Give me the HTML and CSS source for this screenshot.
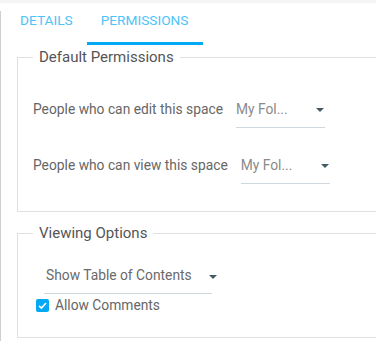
FILE: index.html
```html
<!DOCTYPE html>
<html>

<head>
  <title>Space Settings</title>
  <link rel="stylesheet" href="styles.css">
</head>

<body>
  <div class="band"></div>
  <div class="panel">
    <div class="tabs">
      <div class="tab">Details</div>
      <div class="tab active">Permissions</div>
    </div>

    <fieldset class="group">
      <legend>Default Permissions</legend>
      <div class="row first">
        <span class="label">People who can edit this space</span>
        <div class="select">
          <span class="value">My Fol...</span>
          <span class="caret"></span>
        </div>
      </div>
      <div class="row">
        <span class="label">People who can view this space</span>
        <div class="select">
          <span class="value">My Fol...</span>
          <span class="caret"></span>
        </div>
      </div>
    </fieldset>

    <fieldset class="group viewing">
      <legend>Viewing Options</legend>
      <div class="select wide">
        <span class="value">Show Table of Contents</span>
        <span class="caret"></span>
      </div>
      <label class="check">
        <span class="box">
          <svg width="11" height="11" viewBox="0 0 11 11">
            <path d="M2 5.8 L4.4 8 L9 3" fill="none" stroke="#fff" stroke-width="1.6" />
          </svg>
        </span>
        Allow Comments
      </label>
    </fieldset>
  </div>
</body>

</html>
```

FILE: styles.css
```css
html,
body {
  margin: 0;
  height: 341px;
  overflow: hidden;
  background: #fff;
  font-family: Roboto, "Noto Sans", sans-serif;
}

.band {
  height: 3px;
  background: #f5f5f5;
}

.panel {
  margin-top: 8px;
  border-left: 1px solid #cfcfcf;
  padding-left: 5px;
  height: 330px;
  overflow: hidden;
}

.tabs {
  display: flex;
}

.tab {
  padding: 1px 14px 14px;
  font-size: 13.7px;
  line-height: 16px;
  text-transform: uppercase;
  color: #4fc3f7;
  border-bottom: 3px solid transparent;
}

.tab.active {
  border-bottom-color: #03a9f4;
}

.group {
  margin: 3px 0 0 11px;
  width: 400px;
  padding: 0 15px 27px;
  border: 1px solid #e0e0e0;
}

.group legend {
  padding: 0 6px;
  margin-left: 0;
  font-size: 15px;
  color: #555;
}

.row {
  display: flex;
  align-items: flex-start;
  margin-top: 29px;
}

.row.first {
  margin-top: 35px;
}

.label {
  font-size: 13.8px;
  line-height: 16px;
  color: #666;
  margin-right: 13px;
}

.select {
  display: flex;
  justify-content: space-between;
  align-items: center;
  width: 89px;
  padding-bottom: 10px;
  border-bottom: 1px solid #cfd8dc;
}

.value {
  font-size: 13.8px;
  line-height: 16px;
  color: #8a8a8a;
}

.caret {
  width: 0;
  height: 0;
  margin: 2px 1px 0 0;
  border-left: 4px solid transparent;
  border-right: 4px solid transparent;
  border-top: 4px solid #455a64;
}

.viewing {
  margin-top: 12px;
  padding-bottom: 24px;
}

.select.wide {
  width: 166px;
  margin: 25px 0 0 11px;
  padding-left: 2px;
}

.select.wide .value {
  color: #6a6a6a;
}

.select.wide .caret {
  margin: 4px -5px 0 0;
}

.check {
  display: flex;
  align-items: center;
  gap: 6px;
  margin: 3px 0 0 3px;
  font-size: 13.8px;
  line-height: 16px;
  color: #666;
}

.box {
  display: flex;
  align-items: center;
  justify-content: center;
  width: 13px;
  height: 13px;
  border-radius: 2px;
  background: #03a9f4;
}
```
